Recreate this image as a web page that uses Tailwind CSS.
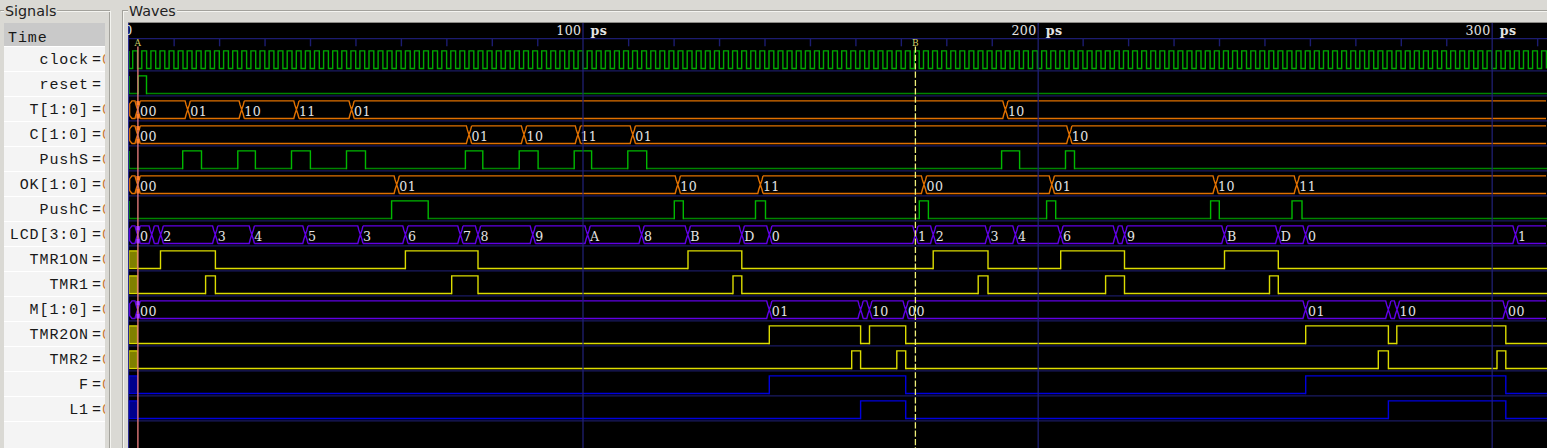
<!DOCTYPE html>
<html lang="en">
<head>
<meta charset="utf-8">
<title>Waveform viewer</title>
<script src="https://cdn.jsdelivr.net/npm/@tailwindcss/browser@4"></script>
</head>
<body class="w-[1547px] h-[448px] overflow-hidden bg-[#dad9d4]">
<main class="flex w-[1547px] h-[448px] overflow-hidden">
  <section class="relative w-[110px] shrink-0 h-full flex flex-col">
    <div class="absolute left-0 right-0 top-[10px] bottom-[-4px] border-t border-r border-[#a3a29c]"></div>
    <div class="absolute left-px right-[-1px] top-[11px] bottom-[-4px] border-t border-r border-[#f4f4f0]"></div>
    <h2 class="relative h-[23px] ml-[4px] self-start bg-[#dad9d4] px-px font-['DejaVu_Sans'] text-[14.3px] leading-[22px] text-[#222]">Signals</h2>
    <div class="relative ml-[4px] w-[101px] flex-1 flex flex-col bg-[#f4f4f4] overflow-hidden font-['Liberation_Mono'] text-[15px] tracking-[0.9px] text-[#181818]">
      <div class="h-[23px] shrink-0 bg-[#c9c9c9] pl-[4px] pt-[6px] leading-[20px]">Time</div>
      <div id="names" class="flex flex-col"></div>
    </div>
  </section>
  <section class="relative ml-[12px] flex-1 h-full flex flex-col">
    <div class="absolute left-0 right-0 top-[10px] bottom-[-4px] border-t border-l border-[#a3a29c]"></div>
    <div class="absolute left-px right-0 top-[11px] bottom-[-4px] border-t border-l border-[#f4f4f0]"></div>
    <h2 class="relative h-[22px] ml-[6px] self-start bg-[#dad9d4] px-px font-['DejaVu_Sans'] text-[14.3px] leading-[22px] text-[#222]">Waves</h2>
    <div class="relative ml-[6px] flex-1 border-t border-[#8b8a86] bg-black overflow-hidden">
      <svg id="waves" class="block w-[1419px] h-[425px]" viewBox="128 23 1419 425" fill="none"></svg>
    </div>
  </section>
</main>
<script>
const G = '#00b800', O = '#e07000', P = '#6000e4', Y = '#dcdc00', B = '#0000dc';
const END = 1547;
const signals = [
  { n: 'clock', c: G, k: 'clock' },
  { n: 'reset', c: G, e: [[138.2, 146.5]] },
  { n: 'T[1:0]', c: O, b: [[187.7,'01'],[241.7,'10'],[296.4,'11'],[351.6,'01'],[1005.4,'10']] },
  { n: 'C[1:0]', c: O, b: [[469,'01'],[524,'10'],[577.9,'11'],[632.8,'01'],[1069.3,'10']] },
  { n: 'PushS', c: G, e: [[182.7,201.5],[237.8,255.4],[291.5,310.4],[346.5,365.5],[465.4,482.8],[519.2,538.1],[574.2,591.6],[627.8,646.7],[1001.6,1019.6],[1065.5,1074.5]] },
  { n: 'OK[1:0]', c: O, b: [[396.7,'01'],[677.8,'10'],[760.4,'11'],[924,'00'],[1051.8,'01'],[1215.6,'10'],[1296.8,'11']] },
  { n: 'PushC', c: G, e: [[391.6,428.2],[674.3,683.3],[755.5,765.5],[919.3,928.4],[1046.6,1055.7],[1210.6,1219.3],[1292,1302]] },
  { n: 'LCD[3:0]', c: P, i: '0', b: [[151.7,''],[160.7,'2'],[215.2,'3'],[251.8,'4'],[305.4,'5'],[360.4,'3'],[405.4,'6'],[460.4,'7'],[478,'8'],[532.8,'9'],[587.6,'A'],[641.6,'8'],[687.8,'B'],[741.8,'D'],[769.3,'0'],[915.4,'1'],[933.2,'2'],[987.9,'3'],[1015.4,'4'],[1060.5,'6'],[1115.8,''],[1124.6,'9'],[1224.4,'B'],[1278.2,'D'],[1305.6,'0'],[1515.5,'1']] },
  { n: 'TMR1ON', c: Y, u: '#808000', e: [[160.5,215.4],[405.4,478],[688,741.8],[933.2,988],[1060.7,1124.5],[1224.5,1278.3]] },
  { n: 'TMR1', c: Y, u: '#808000', e: [[205.6,215.4],[451.7,478],[733,741.8],[978.2,988],[1105.6,1124.5],[1269.5,1278.3]] },
  { n: 'M[1:0]', c: P, b: [[769.3,'01'],[860.6,''],[869.4,'10'],[905.6,'00'],[1305.6,'01'],[1388.3,''],[1397,'10'],[1505.6,'00']] },
  { n: 'TMR2ON', c: Y, u: '#808000', e: [[769.3,860.6],[869.5,905.7],[1305.7,1388.4],[1396.8,1505.8]] },
  { n: 'TMR2', c: Y, u: '#808000', e: [[851.7,860.6],[896.8,905.7],[1378.3,1388.4],[1497,1505.8]] },
  { n: 'F', c: B, u: '#00008c', e: [[769.3,905.7],[1305.7,1505.8]] },
  { n: 'L1', c: B, u: '#00008c', e: [[860.6,905.7],[1388.4,1505.8]] }
];

document.getElementById('names').innerHTML = signals.map((s, i) =>
  `<div class="flex h-[25px] shrink-0 border-t border-white leading-[28px] whitespace-pre"><span class="w-[85px] shrink-0 text-right">${s.n}</span><span class="ml-[3px] w-[10px] shrink-0">=</span><span class="shrink-0 text-[#c47a3c]">${i === 1 ? '.' : '0'}</span></div>`
).join('') + '<div class="border-t border-white"></div>';

const line = (d, c, w = 1.4, x = '') => `<path d="${d}" stroke="${c}" stroke-width="${w}" ${x}/>`;
const text = (x, y, t, x2 = '') => `<text x="${x}" y="${y}" class="font-['DejaVu_Serif'] text-[12.6px] tracking-[0.45px]" fill="#e4e4e4" ${x2}>${t}</text>`;
let out = '';

// grid
out += line(`M128 38.6H${END}`, '#1c1c70');
for (let k = 1; k <= 31; k++) {
  const x = 128.7 + 45.45 * k;
  if (k % 10) out += line(`M${x} 38.6V46.3`, '#1c1c70', 1.4);
}
signals.forEach((s, i) => { out += line(`M128 ${70.9 + 25 * i}H${END}`, '#1a1a62', 1.4); });

// traces
signals.forEach((s, i) => {
  const hi = 50.9 + 25 * i, lo = 68.5 + 25 * i;
  if (s.k === 'clock') {
    let d = `M129 ${hi}V${lo}`;
    for (let x = 132.7; x < END; x += 9.09) d += `H${x.toFixed(1)}V${hi}H${(x + 4.8).toFixed(1)}V${lo}`;
    out += line(d, '#00a800');
  } else if (s.e) {
    let lows = `M${s.u ? 137.5 : 129} ${lo}`, highs = '';
    s.e.forEach(([a, b]) => { lows += `H${a}M${b} ${lo}`; highs += `M${a} ${lo}V${hi}H${b}V${lo}`; });
    lows += `H${END}`;
    out += line(lows, s.c === G ? '#008400' : s.c) + line(highs, s.c, 1.4, 'stroke-linecap="square"');
    if (s.u) out += `<rect x="129" y="${hi}" width="8.5" height="${lo - hi}" fill="${s.u}" stroke="${s.c}" stroke-width="1.2"/>`;
    else out += line(`M129 ${hi}V${lo}`, s.c);
  } else {
    const pts = [[137.6, s.i || '00'], ...s.b];
    let d = `M132 ${hi}L129.6 ${hi + 3}V${lo - 3}L132 ${lo}`, from = 131.5;
    pts.forEach(([c]) => {
      d += `M${from} ${hi}H${c - 2.6}L${c - 1.6} ${hi + 4}L${c + 1.6} ${lo - 4}L${c + 2.6} ${lo}`;
      d += `M${from} ${lo}H${c - 2.6}L${c - 1.6} ${lo - 4}L${c + 1.6} ${hi + 4}L${c + 2.6} ${hi}`;
      from = c + 2.6;
    });
    d += `M${from} ${hi}H${END - 1}M${from} ${lo}H${END - 1}`;
    out += line(d, s.c);
    pts.forEach(([c, t]) => { if (t) out += text(c + 2.5, 116.1 + 25 * (i - 2), t); });
  }
});

// major time lines, markers
[583, 1038.2, 1492.2].forEach((x, k) => {
  out += line(`M${x} 23V448`, '#22227c', 1.5, 'opacity="0.8"');
  out += text(x - 26.8, 35.2, (k + 1) + '00');
  out += text(x + 7.6, 35.2, 'ps', 'font-weight="bold"');
});
out += line('M128.5 23V448', '#2a2a90', 1.2);
out += text(124.3, 35.2, '0');
out += line('M137.9 46.5V448', '#e07878', 1.4);
out += line('M915.4 46.5V448', '#f0f078', 1.3, 'stroke-dasharray="6.2 2.15"');
signals.forEach((s, i) => {
  if (!s.b) return;
  const c = s.c === O ? '#ff8030' : '#b040ff', y = 50.9 + 25 * i;
  out += line(`M137.9 ${y}v4.4M137.9 ${y + 13.2}v4.4`, c, 3);
});
out += `<text x="134.6" y="45.6" class="font-['DejaVu_Serif'] text-[9px]" fill="#d0d068">A</text>`;
out += `<text x="912" y="45.6" class="font-['DejaVu_Serif'] text-[9px]" fill="#d0d068">B</text>`;
document.getElementById('waves').innerHTML = out;
</script>
</body>
</html>
